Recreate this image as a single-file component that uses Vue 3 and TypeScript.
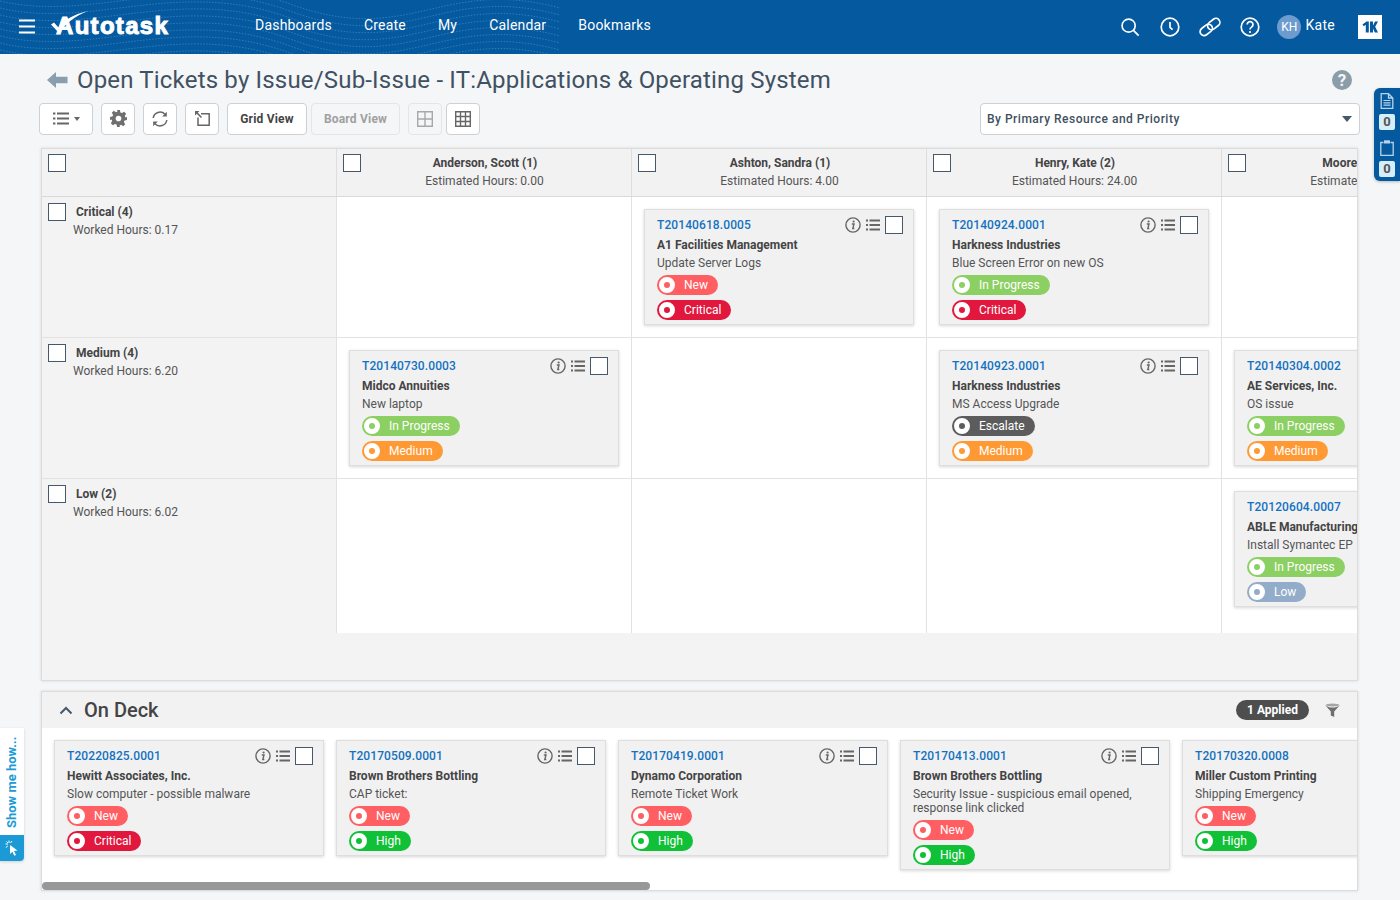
<script setup lang="ts">
interface Ticket {
  id: string
  company: string
  title: string
  status: string
  priority: string
}

const nav = ['Dashboards', 'Create', 'My', 'Calendar', 'Bookmarks']

const pillClass = (label: string) => 'pill-' + label.toLowerCase().replace(/\s+/g, '-')

const columns = [
  { name: 'Anderson, Scott (1)', hours: 'Estimated Hours: 0.00' },
  { name: 'Ashton, Sandra (1)', hours: 'Estimated Hours: 4.00' },
  { name: 'Henry, Kate (2)', hours: 'Estimated Hours: 24.00' },
  { name: 'Moore, Franky (2)', hours: 'Estimated Hours: 0.00' }
]

const rows: { name: string; hours: string; cls: string; cells: (Ticket | null)[] }[] = [
  {
    name: 'Critical (4)',
    hours: 'Worked Hours: 0.17',
    cls: 'row-std',
    cells: [
      null,
      { id: 'T20140618.0005', company: 'A1 Facilities Management', title: 'Update Server Logs', status: 'New', priority: 'Critical' },
      { id: 'T20140924.0001', company: 'Harkness Industries', title: 'Blue Screen Error on new OS', status: 'In Progress', priority: 'Critical' },
      null
    ]
  },
  {
    name: 'Medium (4)',
    hours: 'Worked Hours: 6.20',
    cls: 'row-std',
    cells: [
      { id: 'T20140730.0003', company: 'Midco Annuities', title: 'New laptop', status: 'In Progress', priority: 'Medium' },
      null,
      { id: 'T20140923.0001', company: 'Harkness Industries', title: 'MS Access Upgrade', status: 'Escalate', priority: 'Medium' },
      { id: 'T20140304.0002', company: 'AE Services, Inc.', title: 'OS issue', status: 'In Progress', priority: 'Medium' }
    ]
  },
  {
    name: 'Low (2)',
    hours: 'Worked Hours: 6.02',
    cls: 'row-last',
    cells: [
      null,
      null,
      null,
      { id: 'T20120604.0007', company: 'ABLE Manufacturing', title: 'Install Symantec EP', status: 'In Progress', priority: 'Low' }
    ]
  }
]

const deck: Ticket[] = [
  { id: 'T20220825.0001', company: 'Hewitt Associates, Inc.', title: 'Slow computer - possible malware', status: 'New', priority: 'Critical' },
  { id: 'T20170509.0001', company: 'Brown Brothers Bottling', title: 'CAP ticket:', status: 'New', priority: 'High' },
  { id: 'T20170419.0001', company: 'Dynamo Corporation', title: 'Remote Ticket Work', status: 'New', priority: 'High' },
  { id: 'T20170413.0001', company: 'Brown Brothers Bottling', title: 'Security Issue - suspicious email opened, response link clicked', status: 'New', priority: 'High' },
  { id: 'T20170320.0008', company: 'Miller Custom Printing', title: 'Shipping Emergency', status: 'New', priority: 'High' }
]

const waves = [0, 1, 2, 3, 4, 5, 6, 7, 8, 9, 10, 11, 12, 13].map(
  (i) => `M-20 ${i * 7 - 12} C 80 ${i * 7 + 24}, 170 ${i * 7 - 40}, 290 ${i * 7 + 4} S 440 ${i * 7 - 24}, 560 ${i * 7 + 8}`
)
</script>

<template>
  <div class="page">
    <header class="topbar">
      <svg class="waves" width="560" height="54" viewBox="0 0 560 54" aria-hidden="true">
        <path v-for="d in waves" :key="d" :d="d" fill="none" stroke="#5c9fd2" stroke-width="1" stroke-dasharray="1.5 1.5" opacity="0.5" />
      </svg>
      <svg class="burger" width="18" height="15" viewBox="0 0 18 15" aria-hidden="true">
        <path d="M1 1.5h16M1 7.5h16M1 13.5h16" stroke="#fff" stroke-width="1.8" />
      </svg>
      <div class="logo">
        <span class="logo-text">Autotask</span>
        <svg class="logo-check" width="40" height="24" viewBox="0 0 40 24" aria-hidden="true">
          <path d="M0 13.5 L3 11.5 L7.5 16.5 C12 9.500 22 3.500 37 0 C24 5 14 13 8 22 Z" fill="#fff" />
        </svg>
      </div>
      <nav class="nav">
        <a v-for="n in nav" :key="n">{{ n }}</a>
      </nav>
      <div class="top-right">
        <svg width="20" height="20" viewBox="0 0 22 22" aria-hidden="true">
          <circle cx="9.5" cy="9.5" r="7.2" fill="none" stroke="#fff" stroke-width="1.8" />
          <path d="M14.8 14.8 L20.5 20.5" stroke="#fff" stroke-width="2" />
        </svg>
        <svg width="20" height="20" viewBox="0 0 20 20" aria-hidden="true">
          <circle cx="10" cy="10" r="8.8" fill="none" stroke="#fff" stroke-width="1.7" />
          <path d="M10 5v5.4l2.6 2.2" fill="none" stroke="#fff" stroke-width="1.7" />
        </svg>
        <svg class="link-ic" width="24" height="20" viewBox="0 0 24 20" aria-hidden="true">
          <g fill="none" stroke="#fff" stroke-width="1.7" transform="rotate(-38 12 10)">
            <rect x="0.500" y="6" width="13.500" height="8" rx="4" />
            <rect x="10" y="6" width="13.500" height="8" rx="4" />
          </g>
        </svg>
        <svg width="20" height="20" viewBox="0 0 20 20" aria-hidden="true">
          <circle cx="10" cy="10" r="8.8" fill="none" stroke="#fff" stroke-width="1.7" />
          <path d="M7.2 7.6 A2.9 2.9 0 1 1 11.6 10.1 C10.5 10.8 10 11.2 10 12.4" fill="none" stroke="#fff" stroke-width="1.7" />
          <circle cx="10" cy="15" r="1.1" fill="#fff" />
        </svg>
        <div class="user">
          <span class="avatar">KH</span>
          <span class="user-name">Kate</span>
        </div>
        <div class="k-box">
          <svg width="16" height="12" viewBox="0 0 16 12" aria-hidden="true">
            <path d="M0.5 3.5 L4.5 0.5 H6.8 V11.5 H3.8 V3.8 L1.8 5.2 Z M8 0.5 H11 V4.6 L13 0.5 H16 L13.2 5.8 L16 11.5 H12.8 L11 7.4 V11.5 H8 Z" fill="#04599f" />
          </svg>
        </div>
      </div>
    </header>

    <div class="title-row">
      <svg class="back" width="21" height="16" viewBox="0 0 21 16" aria-hidden="true">
        <path d="M0 8 L9 0 V4.8 H20.5 V11.2 H9 V16 Z" fill="#8a9fae" />
      </svg>
      <h1>Open Tickets by Issue/Sub-Issue - IT:Applications &amp; Operating System</h1>
      <span class="help">?</span>
    </div>

    <div class="toolbar">
      <button class="tool tool-list">
        <svg width="16" height="13" viewBox="0 0 16 13" aria-hidden="true">
          <path d="M0 1.5h2.4M4 1.5h12M0 6.5h2.4M4 6.5h12M0 11.5h2.4M4 11.5h12" stroke="#666" stroke-width="1.8" />
        </svg>
        <i class="caret"></i>
      </button>
      <button class="tool">
        <svg width="17" height="17" viewBox="0 0 24 24" aria-hidden="true">
          <path fill-rule="evenodd" fill="#6f6f6f" d="M10 0h4l.7 3.4 2.3 1 3-1.9 2.8 2.8-1.9 3 1 2.3L24 10v4l-3.4.7-1 2.3 1.9 3-2.8 2.8-3-1.9-2.3 1L14 24h-4l-.7-3.4-2.3-1-3 1.9L1.200 18.700l1.900-3-1-2.300L0 14v-4l3.400-.7 1-2.300-1.900-3L5.300 1.200l3 1.900 2.300-1zM12 8a4 4 0 1 0 0 8 4 4 0 0 0 0-8z" />
        </svg>
      </button>
      <button class="tool">
        <svg width="16" height="16" viewBox="0 0 16 16" aria-hidden="true">
          <g fill="none" stroke="#666" stroke-width="1.5">
            <path d="M1.200 7 A6.900 6.900 0 0 1 13 3.200" />
            <path d="M14.800 9 A6.900 6.900 0 0 1 3 12.800" />
          </g>
          <path d="M14.800 .8 V5.500 H10.200 Z M1.200 15.200 V10.500 H5.800 Z" fill="#666" />
        </svg>
      </button>
      <button class="tool">
        <svg width="15" height="15" viewBox="0 0 15 15" aria-hidden="true">
          <g fill="none" stroke="#666" stroke-width="1.500">
            <path d="M6 2.800 H14.200 V14.200 H3 V6.500" />
            <path d="M.9 .9 L6.500 6.500" />
          </g>
          <path d="M0 0 H4.500 L0 4.500 Z" fill="#666" />
        </svg>
      </button>
      <button class="tool tool-text">Grid View</button>
      <button class="tool tool-text tool-off board">Board View</button>
      <button class="tool tool-off">
        <svg width="16" height="16" viewBox="0 0 16 16" aria-hidden="true">
          <path d="M.7 .7H15.300V15.300H.7zM8 .7V15.300M.7 8H15.300" fill="none" stroke="#a8a8a8" stroke-width="1.400" />
        </svg>
      </button>
      <button class="tool tool-grid">
        <svg width="16" height="16" viewBox="0 0 16 16" aria-hidden="true">
          <path d="M.7 .7H15.300V15.300H.7zM5.500 .7V15.300M10.500 .7V15.300M.7 5.500H15.300M.7 10.500H15.300" fill="none" stroke="#666" stroke-width="1.400" />
        </svg>
      </button>
      <div class="select">
        <span>By Primary Resource and Priority</span>
        <i class="select-caret"></i>
      </div>
    </div>

    <section class="board-panel">
      <div class="board-grid">
        <div class="head-cell head-first"><span class="box"></span></div>
        <div v-for="c in columns" :key="c.name" class="head-cell">
          <span class="box"></span>
          <div class="head-name">{{ c.name }}</div>
          <div class="head-hours">{{ c.hours }}</div>
        </div>
        <template v-for="r in rows" :key="r.name">
          <div class="row-head" :class="r.cls">
            <div class="row-title"><span class="box"></span><b>{{ r.name }}</b></div>
            <div class="row-hours">{{ r.hours }}</div>
          </div>
          <div v-for="(t, i) in r.cells" :key="i" class="cell" :class="r.cls">
            <article v-if="t" class="card">
              <div class="card-top">
                <a class="tid">{{ t.id }}</a>
                <svg class="ic-info" width="16" height="16" viewBox="0 0 16 16" aria-hidden="true">
                  <circle cx="8" cy="8" r="7.100" fill="none" stroke="#666" stroke-width="1.400" />
                  <circle cx="8.600" cy="4.500" r="1.100" fill="#666" />
                  <path d="M6.800 7H9L7.800 11.500H9.300" fill="none" stroke="#666" stroke-width="1.400" />
                </svg>
                <svg class="ic-list" width="14" height="12" viewBox="0 0 14 12" aria-hidden="true">
                  <path d="M0 1.500h2M3.500 1.500H14M0 6h2M3.500 6H14M0 10.500h2M3.500 10.500H14" stroke="#666" stroke-width="1.800" />
                </svg>
                <span class="box"></span>
              </div>
              <div class="company">{{ t.company }}</div>
              <div class="tname">{{ t.title }}</div>
              <div class="pills">
                <span class="pill" :class="pillClass(t.status)"><i></i>{{ t.status }}</span>
                <span class="pill" :class="pillClass(t.priority)"><i></i>{{ t.priority }}</span>
              </div>
            </article>
          </div>
        </template>
      </div>
    </section>

    <section class="deck">
      <div class="deck-head">
        <svg class="chev" width="14" height="9" viewBox="0 0 14 9" aria-hidden="true">
          <path d="M1.500 7.500 L7 2 L12.500 7.500" fill="none" stroke="#47586a" stroke-width="2" />
        </svg>
        <h2>On Deck</h2>
        <span class="applied">1 Applied</span>
        <svg class="funnel" width="15" height="14" viewBox="0 0 15 14" aria-hidden="true">
          <path d="M0 2 C2 4 5 4.500 7.500 4.500 C10 4.500 13 4 15 2 L9.200 8.500 V14 L5.800 12.500 V8.500 Z" fill="#6f6f6f" />
          <ellipse cx="7.500" cy="2" rx="6.800" ry="1.500" fill="#a5a5a5" />
        </svg>
      </div>
      <div class="deck-body">
        <article v-for="t in deck" :key="t.id" class="card deck-card">
          <div class="card-top">
            <a class="tid">{{ t.id }}</a>
            <svg class="ic-info" width="16" height="16" viewBox="0 0 16 16" aria-hidden="true">
              <circle cx="8" cy="8" r="7.100" fill="none" stroke="#666" stroke-width="1.400" />
              <circle cx="8.600" cy="4.500" r="1.100" fill="#666" />
              <path d="M6.800 7H9L7.800 11.500H9.300" fill="none" stroke="#666" stroke-width="1.400" />
            </svg>
            <svg class="ic-list" width="14" height="12" viewBox="0 0 14 12" aria-hidden="true">
              <path d="M0 1.500h2M3.500 1.500H14M0 6h2M3.500 6H14M0 10.500h2M3.500 10.500H14" stroke="#666" stroke-width="1.800" />
            </svg>
            <span class="box"></span>
          </div>
          <div class="company">{{ t.company }}</div>
          <div class="tname">{{ t.title }}</div>
          <div class="pills">
            <span class="pill" :class="pillClass(t.status)"><i></i>{{ t.status }}</span>
            <span class="pill" :class="pillClass(t.priority)"><i></i>{{ t.priority }}</span>
          </div>
        </article>
      </div>
      <div class="scroll-track"><div class="scroll-thumb"></div></div>
    </section>

    <aside class="side-tab">
      <svg width="14" height="16" viewBox="0 0 13 16" aria-hidden="true">
        <path d="M.7 .7H8L12.300 5V15.300H.7Z M8 .7V5H12.300" fill="none" stroke="#b9d3e8" stroke-width="1.300" />
        <path d="M3 7.500H10M3 9.800H10M3 12.100H10" stroke="#b9d3e8" stroke-width="1.200" />
      </svg>
      <span class="count">0</span>
      <svg width="14" height="16" viewBox="0 0 14 16" aria-hidden="true">
        <path d="M3.500 2.500H.8V15.300H13.200V2.500H10.500" fill="none" stroke="#b9d3e8" stroke-width="1.300" />
        <path d="M4 .3H10V3.500H4Z" fill="#b9d3e8" />
      </svg>
      <span class="count">0</span>
    </aside>

    <aside class="how-tab">
      <div class="how-text">Show me how...</div>
      <div class="how-icon">
        <svg width="14" height="16" viewBox="0 0 14 16" aria-hidden="true">
          <path d="M5 5 L12.500 10.500 L9 11 L11 15 L9.300 15.800 L7.400 11.800 L5 14 Z" fill="#fff" />
          <path d="M4 .5V3M.5 4H3M1.500 1.500L3 3M7 1L5.500 3M.8 7.500L2.800 6" stroke="#fff" stroke-width="1" />
        </svg>
      </div>
    </aside>
  </div>
</template>

<style scoped>
.page {
  position: relative;
  width: 1400px;
  height: 900px;
  overflow: hidden;
  background: #f5f6f7;
  font-family: Roboto, "Liberation Sans", sans-serif;
  color: #444;
}
.topbar {
  position: relative;
  height: 54px;
  background: #04599f;
  display: flex;
  align-items: center;
  color: #fff;
  overflow: hidden;
}
.waves {
  position: absolute;
  left: 0;
  top: 0;
}
.burger {
  position: relative;
  margin-left: 18px;
  margin-top: -1px;
}
.logo {
  position: relative;
  width: 120px;
  margin-left: 15px;
  height: 30px;
}
.logo-check {
  position: absolute;
  left: 0;
  top: -1px;
}
.logo-text {
  position: absolute;
  left: 5px;
  top: 1px;
  font-family: "Liberation Sans", sans-serif;
  font-weight: 700;
  font-size: 24px;
  line-height: 26px;
  letter-spacing: 1.3px;
  -webkit-text-stroke: 1px #fff;
  color: #fff;
}
.nav {
  position: relative;
  display: flex;
  gap: 32px;
  margin-left: 84px;
  margin-top: -5px;
  font-size: 14px;
  letter-spacing: 0.2px;
}
.top-right {
  position: relative;
  margin-left: auto;
  display: flex;
  align-items: center;
  gap: 20px;
  padding-right: 18px;
  margin-top: -1px;
}
.link-ic {
  margin: 0 -2px;
}
.user {
  display: flex;
  align-items: center;
  gap: 4px;
  margin-left: -3px;
  margin-right: 3px;
}
.avatar {
  width: 24px;
  height: 24px;
  border-radius: 50%;
  background: #6d9bce;
  font-size: 12px;
  line-height: 24px;
  text-align: center;
}
.user-name {
  font-size: 14px;
  letter-spacing: 0.3px;
  margin-top: -3px;
}
.k-box {
  width: 24px;
  height: 24px;
  background: #fff;
  display: flex;
  align-items: center;
  justify-content: center;
}
.title-row {
  display: flex;
  align-items: center;
  height: 47px;
  padding-left: 47px;
  padding-top: 5px;
  box-sizing: border-box;
}
.back {
  margin-right: 9px;
}
h1 {
  margin: 0;
  font-size: 24px;
  font-weight: 400;
  color: #3f5162;
  letter-spacing: 0.18px;
  white-space: nowrap;
}
.help {
  margin-left: auto;
  margin-right: 48px;
  width: 20px;
  height: 20px;
  border-radius: 50%;
  background: #8a9da9;
  color: #f5f6f7;
  font-size: 17px;
  font-weight: 700;
  line-height: 20px;
  text-align: center;
}
.toolbar {
  display: flex;
  align-items: center;
  height: 33px;
  margin-top: 1px;
  padding-left: 39px;
  gap: 8px;
}
.tool {
  box-sizing: border-box;
  width: 34px;
  height: 32px;
  padding: 0;
  background: #fff;
  border: 1px solid #ccd1d5;
  border-radius: 4px;
  display: flex;
  align-items: center;
  justify-content: center;
  font-family: inherit;
}
.tool-list {
  width: 54px;
  gap: 5px;
}
.tool-grid {
  margin-left: -4px;
}
.caret {
  width: 0;
  height: 0;
  border: 3.500px solid transparent;
  border-top: 4px solid #666;
  border-bottom: 0;
}
.tool-text {
  width: 80px;
  font-size: 12px;
  font-weight: 700;
  color: #444;
  letter-spacing: 0.2px;
}
.tool-off {
  background: transparent;
  border-color: #e3e5e7;
  color: #a0a0a0;
}
.board {
  width: 89px;
  margin-left: -4px;
}
.select {
  box-sizing: border-box;
  width: 380px;
  height: 32px;
  margin-left: auto;
  margin-right: 40px;
  background: #fff;
  border: 1px solid #ccd1d5;
  border-radius: 4px;
  display: flex;
  align-items: center;
  justify-content: space-between;
  padding: 0 7px 0 6px;
  font-size: 12px;
  font-weight: 500;
  letter-spacing: 0.5px;
  color: #3f5162;
}
.select-caret {
  width: 0;
  height: 0;
  border: 5px solid transparent;
  border-top: 6px solid #47586a;
  border-bottom: 0;
}
.board-panel {
  box-sizing: border-box;
  width: 1317px;
  height: 533px;
  margin: 13px 0 0 41px;
  background: #f3f3f4;
  border: 1px solid #dcdcdd;
  box-shadow: 0 0 3px rgba(0, 0, 0, 0.12);
  overflow: hidden;
}
.board-grid {
  display: grid;
  grid-template-columns: 294px repeat(4, 295px);
  grid-template-rows: 48px 141px 141px 154px;
  width: 1474px;
}
.head-cell {
  position: relative;
  box-sizing: border-box;
  background: #f2f2f3;
  border-left: 1px solid #dedede;
  border-bottom: 1px solid #d9d9d9;
  text-align: center;
  padding-top: 5px;
  font-size: 12px;
  line-height: 18px;
}
.head-first {
  border-left: 0;
}
.head-cell > .box {
  position: absolute;
  left: 6px;
  top: 5px;
}
.head-name {
  font-weight: 700;
  color: #444;
  padding-left: 2px;
  white-space: nowrap;
}
.head-hours {
  color: #555;
  padding-left: 1px;
  white-space: nowrap;
}
.box {
  box-sizing: border-box;
  display: block;
  flex: none;
  width: 18px;
  height: 18px;
  border: 1px solid #47586a;
  background: #fff;
}
.row-head {
  box-sizing: border-box;
  background: #f3f3f4;
  padding: 6px 0 0 6px;
  font-size: 12px;
  color: #555;
}
.row-std {
  border-bottom: 1px solid #e2e2e2;
}
.row-title {
  display: flex;
  align-items: center;
  gap: 10px;
  height: 18px;
}
.row-title b {
  color: #444;
}
.row-hours {
  padding-left: 25px;
  margin-top: 1px;
  line-height: 16px;
}
.cell {
  box-sizing: border-box;
  background: #fff;
  border-left: 1px solid #e2e2e2;
  padding: 12px 0 0 12px;
  min-width: 0;
}
.card {
  box-sizing: border-box;
  width: 270px;
  height: 116px;
  background: #f1f1f2;
  border: 1px solid #dedede;
  box-shadow: 0 1px 3px rgba(0, 0, 0, 0.16);
  padding: 6px 0 0 12px;
  font-size: 12px;
}
.card-top {
  display: flex;
  align-items: center;
  height: 18px;
  padding-right: 10px;
}
.tid {
  font-weight: 500;
  color: #1471c0;
  letter-spacing: 0.1px;
  margin-right: auto;
}
.ic-info {
  margin-right: 5px;
}
.ic-list {
  margin-right: 5px;
}
.company {
  margin-top: 2px;
  line-height: 18px;
  font-weight: 700;
  color: #444;
  white-space: nowrap;
}
.tname {
  line-height: 14px;
  margin-top: 2px;
  color: #555;
  width: 235px;
}
.pills {
  display: flex;
  flex-direction: column;
  align-items: flex-start;
  gap: 5px;
  margin-top: 5px;
}
.pill {
  box-sizing: border-box;
  display: flex;
  align-items: center;
  height: 20px;
  padding: 0 10px 0 2px;
  border-radius: 10px;
  color: #fff;
  font-size: 12px;
  line-height: 20px;
}
.pill i {
  box-sizing: border-box;
  width: 16px;
  height: 16px;
  border-radius: 50%;
  border: 5px solid #fff;
  margin-right: 9px;
  background: currentColor;
}
.pill-new { background: #ff5f63; }
.pill-new i { background: #ff5f63; }
.pill-critical { background: #e2173d; }
.pill-critical i { background: #e2173d; }
.pill-in-progress { background: #8ccf62; }
.pill-in-progress i { background: #8ccf62; }
.pill-medium { background: #ff9933; }
.pill-medium i { background: #ff9933; }
.pill-escalate { background: #5c5c5c; }
.pill-escalate i { background: #5c5c5c; }
.pill-low { background: #92acca; }
.pill-low i { background: #92acca; }
.pill-high { background: #10c138; }
.pill-high i { background: #10c138; }
.deck {
  position: relative;
  box-sizing: border-box;
  width: 1317px;
  height: 200px;
  margin: 10px 0 0 41px;
  background: #fff;
  border: 1px solid #dcdcdd;
  box-shadow: 0 0 3px rgba(0, 0, 0, 0.12);
  overflow: hidden;
}
.deck-head {
  display: flex;
  align-items: center;
  height: 36px;
  background: #f2f2f3;
}
.chev {
  margin-left: 17px;
}
h2 {
  margin: 0 0 0 11px;
  font-size: 20px;
  font-weight: 500;
  color: #444;
  line-height: 36px;
}
.applied {
  margin-left: auto;
  height: 20px;
  width: 73px;
  border-radius: 10px;
  background: #4e4e4e;
  color: #fff;
  font-size: 12px;
  font-weight: 700;
  line-height: 20px;
  text-align: center;
}
.funnel {
  margin: 0 17px 0 16px;
}
.deck-body {
  display: flex;
  align-items: flex-start;
  gap: 12px;
  padding: 12px 0 0 12px;
  width: 1500px;
}
.deck-card {
  flex: none;
}
.deck-card:nth-child(4) {
  height: 130px;
}
.scroll-track {
  position: absolute;
  left: 0;
  right: 0;
  bottom: 0;
  height: 8px;
}
.scroll-thumb {
  width: 608px;
  height: 8px;
  border-radius: 4px;
  background: #989898;
}
.side-tab {
  position: absolute;
  left: 1374px;
  top: 88px;
  box-sizing: border-box;
  width: 26px;
  height: 93px;
  background: #04599f;
  border-radius: 6px 0 0 6px;
  display: flex;
  flex-direction: column;
  align-items: center;
  padding: 5px 0 0 0;
  box-shadow: 0 1px 3px rgba(0, 0, 0, 0.25);
}
.side-tab svg {
  flex: none;
}
.count {
  box-sizing: border-box;
  flex: none;
  width: 16px;
  height: 16px;
  margin: 5px 0 10px;
  background: #d4effa;
  border-radius: 2px;
  color: #555;
  font-size: 13px;
  font-weight: 700;
  line-height: 16px;
  text-align: center;
}
.count:last-child {
  margin-bottom: 0;
}
.how-tab {
  position: absolute;
  left: 0;
  top: 728px;
  width: 24px;
  height: 133px;
  border-radius: 0 0 4px 0;
  overflow: hidden;
  box-shadow: 0 1px 3px rgba(0, 0, 0, 0.15);
}
.how-text {
  box-sizing: border-box;
  height: 107px;
  background: #fff;
  writing-mode: vertical-rl;
  transform: rotate(180deg);
  color: #1b9ad6;
  font-size: 13px;
  font-weight: 700;
  line-height: 24px;
  padding-top: 7px;
}
.how-icon {
  height: 26px;
  background: #1b9ad6;
  display: flex;
  align-items: center;
  justify-content: center;
}
</style>

<style>
body {
  margin: 0;
}
</style>
